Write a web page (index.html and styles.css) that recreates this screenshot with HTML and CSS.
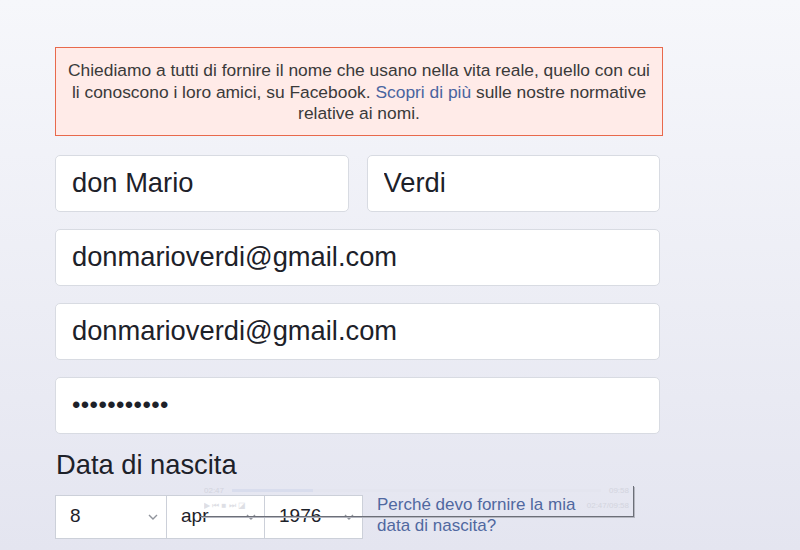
FILE: index.html
```html
<!DOCTYPE html>
<html lang="it">

<head>
    <meta charset="UTF-8">
    <meta name="viewport" content="width=device-width, initial-scale=1.0">
    <title>Iscriviti</title>
    <link rel="stylesheet" href="styles.css">
</head>

<body>
    <div class="form">
        <div class="notice">
            Chiediamo a tutti di fornire il nome che usano nella vita reale, quello con cui
            li conoscono i loro amici, su Facebook. <a href="#">Scopri di più</a> sulle nostre normative
            relative ai nomi.
        </div>

        <div class="row split">
            <input class="field" type="text" value="don Mario">
            <input class="field" type="text" value="Verdi">
        </div>
        <div class="row">
            <input class="field" type="text" value="donmarioverdi@gmail.com">
        </div>
        <div class="row">
            <input class="field" type="text" value="donmarioverdi@gmail.com">
        </div>
        <div class="row">
            <input class="field dots" type="text" value="•••••••••••">
        </div>

        <h2 class="label">Data di nascita</h2>

        <div class="birthday">
            <div class="select day">
                <span>8</span>
                <svg class="chev" width="10" height="6" viewBox="0 0 10 6"><path d="M1 1l4 4 4-4" fill="none" stroke="#90949c" stroke-width="1.4"/></svg>
            </div>
            <div class="select month">
                <span>apr</span>
                <svg class="chev" width="10" height="6" viewBox="0 0 10 6"><path d="M1 1l4 4 4-4" fill="none" stroke="#90949c" stroke-width="1.4"/></svg>
            </div>
            <div class="select year">
                <span>1976</span>
                <svg class="chev" width="10" height="6" viewBox="0 0 10 6"><path d="M1 1l4 4 4-4" fill="none" stroke="#90949c" stroke-width="1.4"/></svg>
            </div>
            <a class="why" href="#">Perché devo fornire la mia data di nascita?</a>

            <!-- ghost of a video player bar left on the capture -->
            <div class="ghost">
                <div class="ghost-top">
                    <small>02:47</small>
                    <div class="ghost-track"><div class="ghost-fill"></div></div>
                    <small>09:58</small>
                </div>
                <div class="ghost-bottom">
                    <small>▶ ⏮ ■ ⏭ ◪</small>
                    <small>02:47/09:58</small>
                </div>
            </div>
        </div>
    </div>
</body>

</html>
```

FILE: styles.css
```css
html {
    font-family: "Liberation Sans", Arial, sans-serif;
}

body {
    margin: 0;
    height: 550px;
    overflow: hidden;
    background: linear-gradient(#f6f7fb, #e4e5f0);
}

.form {
    width: 605px;
    padding: 47px 0 0 55px;
}

.notice {
    margin-right: -3px;
    background: #ffebe8;
    border: 1px solid #e8694c;
    padding: 12px 6px 10px;
    text-align: center;
    font-size: 17.4px;
    line-height: 21.5px;
    color: #3a3a3a;

    a {
        color: #4a64a0;
        text-decoration: none;
    }
}

.row {
    display: flex;
    margin-bottom: 17px;
}

.split {
    margin-top: 19px;
    gap: 18px;
}

.field {
    flex: 1;
    min-width: 0;
    height: 57px;
    box-sizing: border-box;
    border: 1px solid #d8dbe2;
    border-radius: 5px;
    background: #fff;
    padding: 0 16px;
    font-family: inherit;
    font-size: 27.3px;
    color: #1d2129;
    outline: none;
}

.dots {
    font-size: 24px;
    letter-spacing: 0.4px;
}

.label {
    margin: -2px 0 14px 1px;
    font-weight: normal;
    font-size: 27.3px;
    line-height: 32px;
    color: #1d2129;
}

.birthday {
    position: relative;
    display: flex;
    align-items: center;
}

.select {
    display: flex;
    align-items: center;
    justify-content: space-between;
    height: 44px;
    box-sizing: border-box;
    border: 1px solid #ccd0d9;
    background: #fff;
    padding: 0 8px 2px 14px;
    font-size: 19px;
    color: #1d2129;
    margin-right: -1px;
}

.day {
    width: 112px;
}

.month {
    width: 99px;
}

.year {
    width: 99px;
}

.chev {
    margin-top: 3px;
}

.why {
    width: 230px;
    margin-left: 15px;
    margin-top: -3px;
    font-size: 17px;
    line-height: 21px;
    color: #5068a0;
    text-decoration: none;
}

.ghost {
    position: absolute;
    left: 145px;
    top: -9px;
    width: 433px;
    height: 30px;
    border-right: 1px solid #6c6f78;
    border-bottom: 1px solid #6c6f78;
    box-shadow: 1px 1px 0 #b5b7c0;
    font-size: 8px;
    color: #c4c6d0;

    small {
        font-size: 8px;
    }
}

.ghost-top,
.ghost-bottom {
    opacity: 0.55;
}

.ghost-top {
    display: flex;
    align-items: center;
    gap: 8px;
    padding: 0 4px;
}

.ghost-track {
    flex: 1;
    height: 3px;
    background: #e3e5ee;
}

.ghost-fill {
    width: 22%;
    height: 100%;
    background: #cfd6ea;
}

.ghost-bottom {
    display: flex;
    justify-content: space-between;
    padding: 6px 4px 0;
}
```
